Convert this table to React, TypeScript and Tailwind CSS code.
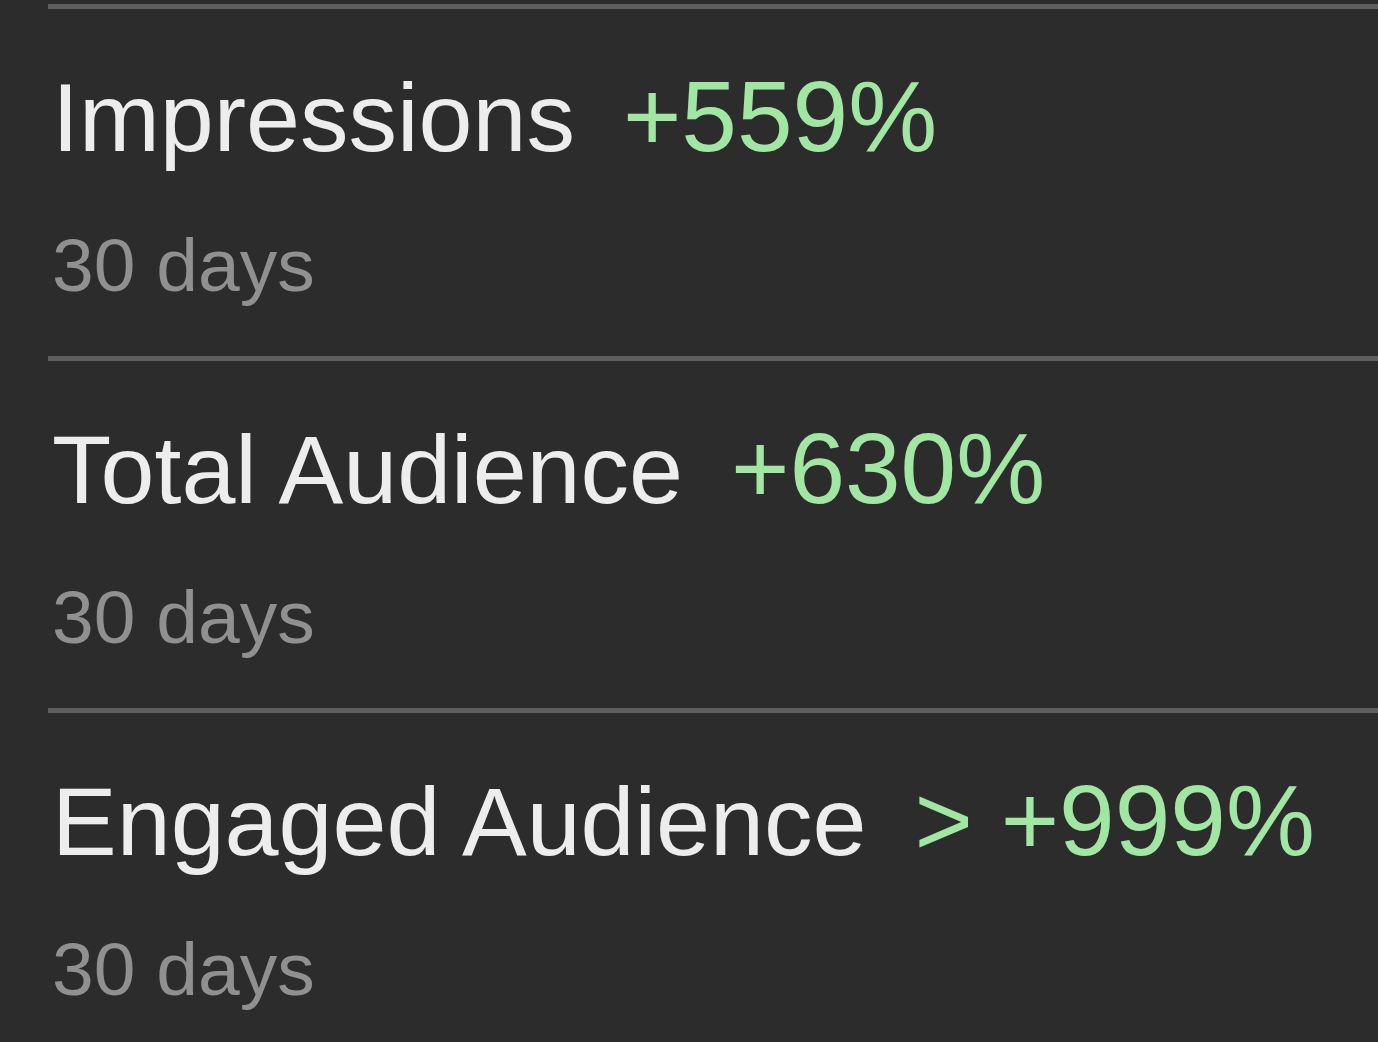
const ROWS = [
  { title: 'Impressions', change: '+559%' },
  { title: 'Total Audience', change: '+630%' },
  { title: 'Engaged Audience', change: '> +999%' },
];

function StatRow({ title, change }: { title: string; change: string }) {
  return (
    <div className="flex flex-col">
      {/* separator */}
      <div className="h-[5px] bg-[#5e5f5e]" />
      <div className="flex flex-col pl-1 pt-[57px] pb-[53px]">
        <div className="flex items-baseline gap-12 whitespace-nowrap">
          <span className="text-[97px] leading-none text-[#ededed]">{title}</span>
          <span className="text-[100px] leading-none text-[#a2e6a4]">{change}</span>
        </div>
        <div className="mt-[62px] text-[75px] leading-none text-[#8f908f]">30 days</div>
      </div>
    </div>
  );
}

export default function App() {
  return (
    <div
      className="w-[1378px] h-[1042px] overflow-hidden bg-[#2b2c2b] pt-[4px] pl-[48px]"
      style={{ fontFamily: '"Liberation Sans", Arial, sans-serif' }}
    >
      {ROWS.map((r) => (
        <StatRow key={r.title} title={r.title} change={r.change} />
      ))}
    </div>
  );
}
